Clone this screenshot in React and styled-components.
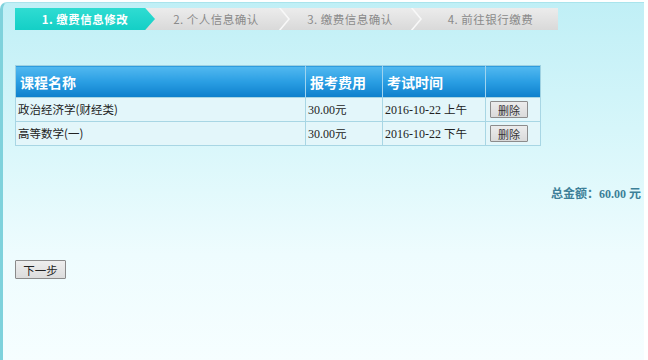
import React from "react";
import styled, { createGlobalStyle } from "styled-components";

const Global = createGlobalStyle`
  html, body { margin: 0; padding: 0; background: #ffffff; }
  body { font-family: "Liberation Serif", "Noto Sans CJK SC", serif; font-size: 12px; }
`;

const Page = styled.div`
  width: 648px;
  height: 360px;
  overflow: hidden;
  background: #ffffff;
  padding-top: 2px;
  box-sizing: border-box;
`;

const Panel = styled.div`
  width: 644px;
  height: 360px;
  box-sizing: border-box;
  border-left: 3px solid #7fd2dc;
  border-top: 1px solid #a9e4ec;
  border-top-left-radius: 7px;
  background: linear-gradient(to bottom, #c0eff6 0%, #d6f6fa 35%, #eefcfe 70%, #f6feff 100%);
  padding: 5px 0 0 12px;
`;

const Steps = styled.div`
  display: flex;
  align-items: stretch;
  width: 543px;
  height: 22px;
  background: linear-gradient(to bottom, #ececec, #d9d9d9);
`;

const Step = styled.div`
  flex: 0 0 ${(p) => p.$w}px;
  display: flex;
  align-items: center;
  justify-content: center;
  box-sizing: border-box;
  font-family: "Noto Sans CJK SC", sans-serif;
  font-size: 11.5px;
  font-weight: ${(p) => (p.$active ? 700 : 400)};
  color: ${(p) => (p.$active ? "#ffffff" : "#8a8a8a")};
  background: ${(p) => (p.$active ? "linear-gradient(to bottom, #2fdcd2, #14cfc6)" : "transparent")};
  clip-path: ${(p) => (p.$active ? "polygon(0 0, 93% 0, 100% 50%, 93% 100%, 0 100%)" : "none")};
  letter-spacing: 0.5px;
  white-space: nowrap;
`;

const Sep = styled.svg`
  flex: 0 0 14px;
  height: 22px;
  display: block;
`;

const Chevron = () => (
  <Sep viewBox="0 0 14 22">
    <polyline points="2,-1 12,11 2,23" fill="none" stroke="#f8f8f8" strokeWidth="1.6" />
  </Sep>
);

const Table = styled.table`
  margin-top: 35px;
  width: 525px;
  border-collapse: collapse;
  table-layout: fixed;
  border: 1px solid #9fd2e2;
`;

const Th = styled.th`
  height: 31px;
  padding: 0 0 0 4px;
  text-align: left;
  font-family: "Noto Sans CJK SC", sans-serif;
  font-size: 14px;
  font-weight: 700;
  color: #ffffff;
  background: linear-gradient(to bottom, #52b9f0 0%, #2a9ee3 50%, #0d7fcc 100%);
  border-left: 1px solid #9fd4ef;
  &:first-child { border-left: none; }
`;

const Td = styled.td`
  height: 23px;
  padding: 0 0 0 2px;
  font-size: 12px;
  color: #222222;
  background: #e3f6fa;
  border: 1px solid #a8d6e4;
  white-space: nowrap;
`;

const Cn = styled.span`
  font-family: "Noto Sans CJK SC", sans-serif;
  font-size: 11.5px;
`;

const SmallBtn = styled.button`
  margin-left: 2px;
  width: 38px;
  height: 17px;
  padding: 0;
  font-family: "Noto Sans CJK SC", sans-serif;
  font-size: 11px;
  color: #333333;
  background: linear-gradient(to bottom, #ececec, #dadada);
  border: 1px solid #8c8c8c;
  border-radius: 1px;
  display: block;
`;

const Total = styled.div`
  margin-top: 38px;
  padding-right: 3px;
  text-align: right;
  font-size: 12px;
  font-weight: 700;
  color: #3c7f98;
`;

const TotalCn = styled.span`
  font-family: "Noto Sans CJK SC", sans-serif;
  font-weight: 700;
`;

const NextBtn = styled.button`
  margin-top: 58px;
  width: 51px;
  height: 19px;
  padding: 0;
  font-family: "Noto Sans CJK SC", sans-serif;
  font-size: 11.5px;
  color: #222222;
  background: linear-gradient(to bottom, #eeeeee, #dcdcdc);
  border: 1px solid #8a8a8a;
  border-radius: 1px;
  display: block;
`;

const rows = [
  { name: "政治经济学(财经类)", fee: "30.00", date: "2016-10-22", half: "上午" },
  { name: "高等数学(一)", fee: "30.00", date: "2016-10-22", half: "下午" },
];

export default function App() {
  return (
    <Page>
      <Global />
      <Panel>
        <Steps>
          <Step $w={140} $active>1. 缴费信息修改</Step>
          <Step $w={122}>2. 个人信息确认</Step>
          <Chevron />
          <Step $w={118}>3. 缴费信息确认</Step>
          <Chevron />
          <Step $w={135}>4. 前往银行缴费</Step>
        </Steps>
        <Table>
          <colgroup>
            <col style={{ width: 290 }} />
            <col style={{ width: 77 }} />
            <col style={{ width: 103 }} />
            <col style={{ width: 55 }} />
          </colgroup>
          <thead>
            <tr>
              <Th>课程名称</Th>
              <Th>报考费用</Th>
              <Th>考试时间</Th>
              <Th></Th>
            </tr>
          </thead>
          <tbody>
            {rows.map((r) => (
              <tr key={r.name}>
                <Td><Cn>{r.name}</Cn></Td>
                <Td>{r.fee}<Cn>元</Cn></Td>
                <Td>{r.date} <Cn>{r.half}</Cn></Td>
                <Td><SmallBtn>删除</SmallBtn></Td>
              </tr>
            ))}
          </tbody>
        </Table>
        <Total>
          <TotalCn>总金额：</TotalCn>60.00 <TotalCn>元</TotalCn>
        </Total>
        <NextBtn>下一步</NextBtn>
      </Panel>
    </Page>
  );
}
